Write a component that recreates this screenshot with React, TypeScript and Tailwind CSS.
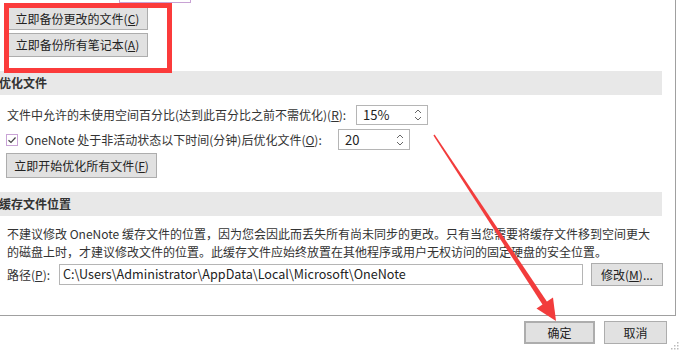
import React from "react";

const font = { fontFamily: '"Noto Sans CJK SC", "Noto Sans", sans-serif' };

const Btn: React.FC<{ className?: string; children: React.ReactNode }> = ({ className = "", children }) => (
  <div
    className={`flex items-center justify-center bg-[#e1e1e1] border border-[#adadad] text-[12px] text-[#222] ${className}`}
  >
    {children}
  </div>
);

const Spin: React.FC<{ value: string; className?: string }> = ({ value, className = "" }) => (
  <div className={`flex items-center justify-between border border-[#b5b5b5] bg-white pl-[6px] pr-[5px] ${className}`}>
    <span className="text-[13px] text-[#222]">{value}</span>
    <svg width="8" height="14" viewBox="0 0 8 14" className="text-[#666]">
      <path d="M1 5 L4 2 L7 5" fill="none" stroke="currentColor" strokeWidth="1" />
      <path d="M1 9 L4 12 L7 9" fill="none" stroke="currentColor" strokeWidth="1" />
    </svg>
  </div>
);

const SectionHeader: React.FC<{ title: string; className?: string }> = ({ title, className = "" }) => (
  <div className={`flex items-center h-[24px] w-[663px] bg-[#e8e8e8] ml-[-1px] ${className}`}>
    <span className="text-[12px] font-bold text-[#333]">{title}</span>
  </div>
);

export default function App() {
  return (
    <div className="relative w-[680px] h-[352px] bg-white overflow-hidden" style={font}>
      {/* scroll panel */}
      <div className="w-[676px] h-[316px] border-r border-b border-[#a0a0a0] overflow-hidden">
        <div className="h-[3px] w-[72px] ml-[119px] border-x border-b border-[#c8a2d4]" />

        <div className="flex flex-col gap-[3px] pl-[7px] pt-[4px]">
          <Btn className="w-[141px] h-[23px]">
            立即备份更改的文件(<u>C</u>)
          </Btn>
          <Btn className="w-[141px] h-[24px]">
            立即备份所有笔记本(<u>A</u>)
          </Btn>
        </div>

        <SectionHeader title="优化文件" className="mt-[14px]" />

        <div className="flex items-center pl-[7px] mt-[10px] text-[12px] text-[#333]">
          <span className="w-[349px] shrink-0">
            文件中允许的未使用空间百分比(达到此百分比之前不需优化)(<u>R</u>):
          </span>
          <Spin value="15%" className="w-[72px] h-[20px]" />
        </div>

        <div className="flex items-center pl-[6px] mt-[4px] text-[12px] text-[#333]">
          <svg width="12" height="12" viewBox="0 0 12 12" className="shrink-0">
            <rect x="0.5" y="0.5" width="11" height="11" fill="white" stroke="#c9a3d6" />
            <path d="M2.5 6.2 L5 8.5 L9.5 3.5" fill="none" stroke="#444" strokeWidth="1.2" />
          </svg>
          <span className="w-[313px] shrink-0 ml-[7px]">
            OneNote 处于非活动状态以下时间(分钟)后优化文件(<u>O</u>):
          </span>
          <Spin value="20" className="w-[72px] h-[21px]" />
        </div>

        <div className="pl-[6px] mt-[3px]">
          <Btn className="w-[151px] h-[25px]">
            立即开始优化所有文件(<u>F</u>)
          </Btn>
        </div>

        <SectionHeader title="缓存文件位置" className="mt-[14px]" />

        <div className="pl-[7px] mt-[9px] text-[12px] leading-[18px] text-[#333] w-[665px]">
          <p>不建议修改 OneNote 缓存文件的位置，因为您会因此而丢失所有尚未同步的更改。只有当您需要将缓存文件移到空间更大</p>
          <p>的磁盘上时，才建议修改文件的位置。此缓存文件应始终放置在其他程序或用户无权访问的固定硬盘的安全位置。</p>
        </div>

        <div className="flex items-center pl-[7px] mt-[2px] text-[12px] text-[#333]">
          <span className="w-[52px] shrink-0">
            路径(<u>P</u>):
          </span>
          <div className="flex items-center w-[524px] h-[21px] border border-[#b5b5b5] bg-white pl-[3px] text-[12.6px] text-[#222]">
            C:\Users\Administrator\AppData\Local\Microsoft\OneNote
          </div>
          <Btn className="w-[72px] h-[23px] ml-[8px]">
            修改(<u>M</u>)...
          </Btn>
        </div>
      </div>

      {/* dialog buttons */}
      <div className="flex items-start justify-end mt-[5px] pr-[13px] gap-[9px]">
        <Btn className="w-[71px] h-[23px] border-2 border-[#8a4f9a]">确定</Btn>
        <Btn className="w-[63px] h-[23px]">取消</Btn>
      </div>
      <svg width="8" height="8" viewBox="0 0 8 8" className="absolute right-[1px] bottom-[2px]">
        <rect x="6" y="0" width="1.5" height="1.5" fill="#bbb" />
        <rect x="3" y="3" width="1.5" height="1.5" fill="#bbb" />
        <rect x="6" y="3" width="1.5" height="1.5" fill="#bbb" />
        <rect x="0" y="6" width="1.5" height="1.5" fill="#bbb" />
        <rect x="3" y="6" width="1.5" height="1.5" fill="#bbb" />
        <rect x="6" y="6" width="1.5" height="1.5" fill="#bbb" />
      </svg>

      {/* annotation overlays */}
      <div className="absolute left-[4px] top-[3px] w-[168px] h-[70px] border-[5px] border-[#fb3b3b]" />
      <svg width="680" height="352" viewBox="0 0 680 352" className="absolute inset-0 pointer-events-none">
        <polygon points="434.6,134.6 433.4,135.4 542.8,305 547.2,302" fill="#f23c3c" />
        <polygon points="556,321 553,297.5 536.5,308.5" fill="#f23c3c" />
      </svg>
    </div>
  );
}
